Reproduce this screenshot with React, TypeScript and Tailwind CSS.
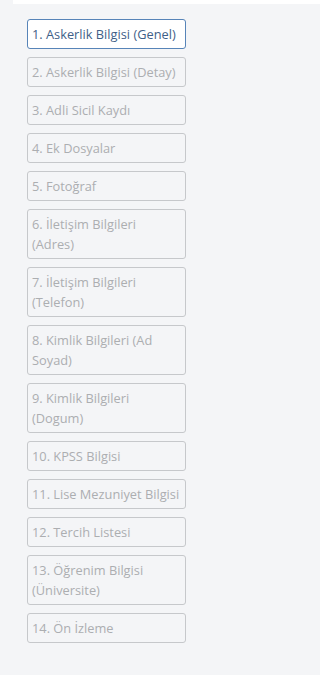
import React from 'react';

const steps = [
  '1. Askerlik Bilgisi (Genel)',
  '2. Askerlik Bilgisi (Detay)',
  '3. Adli Sicil Kaydı',
  '4. Ek Dosyalar',
  '5. Fotoğraf',
  '6. İletişim Bilgileri (Adres)',
  '7. İletişim Bilgileri (Telefon)',
  '8. Kimlik Bilgileri (Ad Soyad)',
  '9. Kimlik Bilgileri (Dogum)',
  '10. KPSS Bilgisi',
  '11. Lise Mezuniyet Bilgisi',
  '12. Tercih Listesi',
  '13. Öğrenim Bilgisi (Üniversite)',
  '14. Ön İzleme',
];

export default function App() {
  const active = 0;
  return (
    <div className="min-h-[675px] w-full bg-[#f4f5f7] font-['Open_Sans',sans-serif]">
      <div className="ml-[13px] h-[4px] bg-white" />
      <div className="ml-[27px] flex w-[159px] flex-col gap-2 pt-[15px]">
        {steps.map((s, i) => (
          <button
            key={s}
            className={
              i === active
                ? 'rounded-[3px] border border-[#5784b8] bg-white py-[4px] pl-[4px] pr-[5px] text-left text-[12.8px] leading-[20px] text-[#3f5f88]'
                : 'rounded-[3px] border border-[#c6c8cb] bg-[#f4f5f7] py-[4px] pl-[4px] pr-[5px] text-left text-[12.8px] leading-[20px] text-[#acaeb1]'
            }
          >
            {s}
          </button>
        ))}
      </div>
    </div>
  );
}
